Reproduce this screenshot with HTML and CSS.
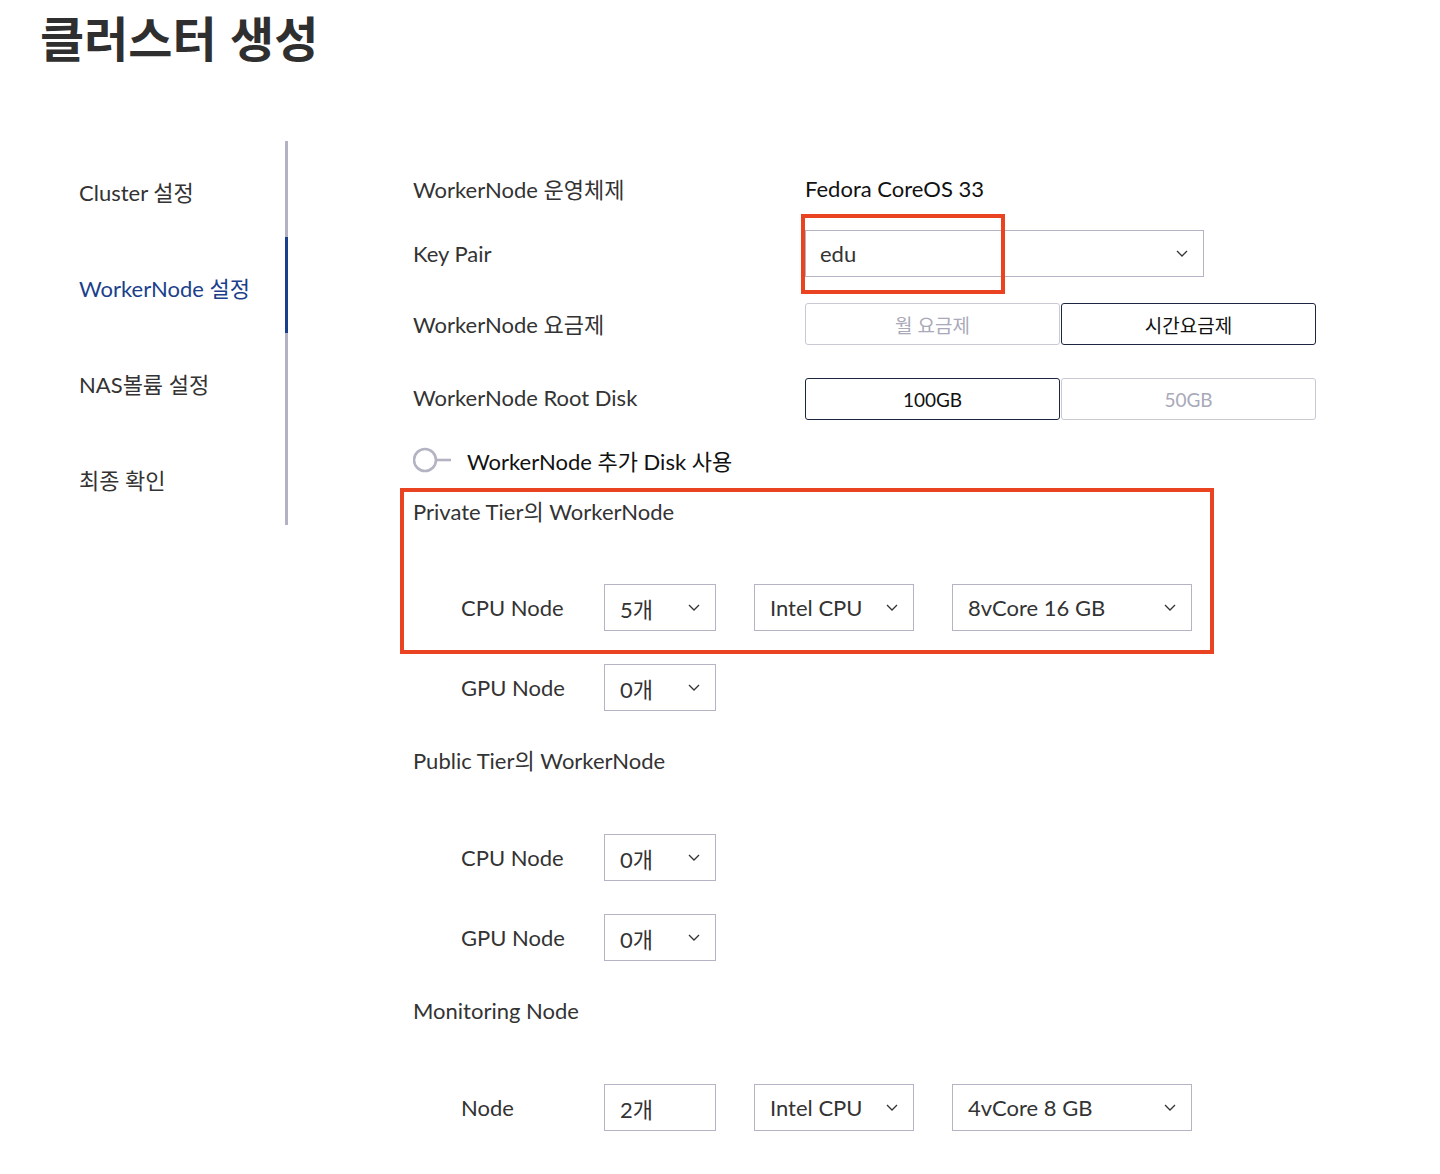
FILE: index.html
```html
<!DOCTYPE html>
<html lang="ko">
<head>
<meta charset="utf-8">
<title>클러스터 생성</title>
<link rel="stylesheet" href="styles.css">
</head>
<body>
<h1 class="title">클러스터 생성</h1>
<div class="layout">
  <nav class="steps">
    <div class="step">Cluster 설정</div>
    <div class="step active">WorkerNode 설정</div>
    <div class="step">NAS볼륨 설정</div>
    <div class="step">최종 확인</div>
  </nav>
  <main class="form">
    <div class="row row-os">
      <div class="label">WorkerNode 운영체제</div>
      <div class="value">Fedora CoreOS 33</div>
    </div>
    <div class="row row-key">
      <div class="label">Key Pair</div>
      <div class="select select-key">
        <span>edu</span>
        <svg class="chev" width="12" height="7" viewBox="0 0 12 7"><path d="M1 1l5 5 5-5" fill="none" stroke="#333" stroke-width="1.3"/></svg>
        <div class="highlight highlight-key"></div>
      </div>
    </div>
    <div class="row row-btn">
      <div class="label">WorkerNode 요금제</div>
      <div class="seg">
        <div class="seg-btn">월 요금제</div>
        <div class="seg-btn on">시간요금제</div>
      </div>
    </div>
    <div class="row row-btn row-disk">
      <div class="label">WorkerNode Root Disk</div>
      <div class="seg">
        <div class="seg-btn on">100GB</div>
        <div class="seg-btn">50GB</div>
      </div>
    </div>
    <div class="row row-toggle">
      <svg class="toggle" width="40" height="26" viewBox="0 0 40 26"><circle cx="12" cy="13" r="11" fill="none" stroke="#b3b3c3" stroke-width="2.6"/><path d="M23 13h15" stroke="#b3b3c3" stroke-width="2.6"/></svg>
      <div class="toggle-text">WorkerNode 추가 Disk 사용</div>
    </div>

    <section class="group boxed">
      <div class="group-title">Private Tier의 WorkerNode</div>
      <div class="node-row">
        <div class="node-label">CPU Node</div>
        <div class="select s-count"><span>5개</span><svg class="chev" width="12" height="7" viewBox="0 0 12 7"><path d="M1 1l5 5 5-5" fill="none" stroke="#333" stroke-width="1.3"/></svg></div>
        <div class="select s-cpu"><span>Intel CPU</span><svg class="chev" width="12" height="7" viewBox="0 0 12 7"><path d="M1 1l5 5 5-5" fill="none" stroke="#333" stroke-width="1.3"/></svg></div>
        <div class="select s-spec"><span>8vCore 16 GB</span><svg class="chev" width="12" height="7" viewBox="0 0 12 7"><path d="M1 1l5 5 5-5" fill="none" stroke="#333" stroke-width="1.3"/></svg></div>
      </div>
    </section>
    <div class="node-row after-box">
      <div class="node-label">GPU Node</div>
      <div class="select s-count"><span>0개</span><svg class="chev" width="12" height="7" viewBox="0 0 12 7"><path d="M1 1l5 5 5-5" fill="none" stroke="#333" stroke-width="1.3"/></svg></div>
    </div>

    <section class="group">
      <div class="group-title">Public Tier의 WorkerNode</div>
      <div class="node-row">
        <div class="node-label">CPU Node</div>
        <div class="select s-count"><span>0개</span><svg class="chev" width="12" height="7" viewBox="0 0 12 7"><path d="M1 1l5 5 5-5" fill="none" stroke="#333" stroke-width="1.3"/></svg></div>
      </div>
      <div class="node-row">
        <div class="node-label">GPU Node</div>
        <div class="select s-count"><span>0개</span><svg class="chev" width="12" height="7" viewBox="0 0 12 7"><path d="M1 1l5 5 5-5" fill="none" stroke="#333" stroke-width="1.3"/></svg></div>
      </div>
    </section>

    <section class="group">
      <div class="group-title">Monitoring Node</div>
      <div class="node-row">
        <div class="node-label">Node</div>
        <div class="select s-count"><span>2개</span></div>
        <div class="select s-cpu"><span>Intel CPU</span><svg class="chev" width="12" height="7" viewBox="0 0 12 7"><path d="M1 1l5 5 5-5" fill="none" stroke="#333" stroke-width="1.3"/></svg></div>
        <div class="select s-spec"><span>4vCore 8 GB</span><svg class="chev" width="12" height="7" viewBox="0 0 12 7"><path d="M1 1l5 5 5-5" fill="none" stroke="#333" stroke-width="1.3"/></svg></div>
      </div>
    </section>
  </main>
</div>
</body>
</html>
```

FILE: styles.css
```css
* { box-sizing: border-box; }

html, body {
  margin: 0;
  padding: 0;
  background: #ffffff;
}

body {
  font-family: Lato, "Noto Sans CJK KR", sans-serif;
  color: #333333;
  width: 1440px;
  min-height: 1174px;
}

.title {
  margin: 0;
  padding-left: 40px;
  height: 72px;
  line-height: 72px;
  font-family: "Noto Sans CJK KR", sans-serif;
  font-size: 48px;
  font-weight: 700;
  color: #2f2f2f;
}

.layout {
  display: flex;
  margin-top: 69px;
}

/* sidebar */
.steps {
  width: 288px;
  flex: none;
  display: flex;
  flex-direction: column;
}

.step {
  height: 96px;
  display: flex;
  align-items: center;
  padding-left: 79px;
  padding-top: 3px;
  font-size: 22px;
  color: #333333;
  border-right: 3px solid #b2b2c4;
}

.step.active {
  color: #1b3f8b;
  border-right-color: #1b3f8b;
}

/* main form */
.form {
  flex: 1;
  padding-left: 125px;
  padding-top: 24px;
}

.row {
  display: flex;
  align-items: center;
}

.label {
  width: 392px;
  flex: none;
  font-size: 22px;
  color: #333333;
}

.value {
  font-size: 22px;
  color: #111111;
}

.row-os { height: 46px; }

.row-key { margin-top: 19px; }

.row-btn { margin-top: 26px; }

.row-btn .label { margin-top: -3px; }

.row-disk { margin-top: 33px; }

.select {
  position: relative;
  display: flex;
  align-items: center;
  justify-content: space-between;
  height: 47px;
  padding: 0 15px;
  border: 1px solid #b4b4c4;
  font-size: 22px;
  color: #333333;
}

.select-key {
  width: 399px;
  height: 47px;
  padding-left: 14px;
}

.chev { flex: none; }

.highlight {
  position: absolute;
  border: 4px solid #ea4322;
  pointer-events: none;
}

.highlight-key {
  left: -5px;
  top: -17px;
  width: 204px;
  height: 80px;
}

.seg {
  display: flex;
  gap: 1px;
}

.seg-btn {
  width: 255px;
  height: 42px;
  display: flex;
  align-items: center;
  justify-content: center;
  border: 1px solid #c9c9d3;
  border-radius: 3px;
  font-size: 19px;
  color: #a9a9b9;
}

.seg-btn.on {
  border-color: #1c2640;
  color: #111111;
}

.row-toggle {
  margin-top: 27px;
  height: 26px;
}

.toggle {
  flex: none;
  margin-left: 0;
}

.toggle-text {
  margin-left: 14px;
  font-size: 22px;
  color: #111111;
}

/* node groups */
.group-title {
  height: 30px;
  line-height: 30px;
  font-size: 22px;
  color: #333333;
}

.group {
  margin-top: 35px;
}

.group .group-title + .node-row {
  margin-top: 58px;
}

.group .node-row + .node-row {
  margin-top: 33px;
}

.boxed {
  margin-top: 15px;
  margin-left: -13px;
  width: 814px;
  border: 4px solid #ea4322;
  padding: 5px 0 19px 9px;
}

.boxed .group-title + .node-row {
  margin-top: 57px;
}

.node-row {
  display: flex;
  align-items: center;
  padding-left: 48px;
}

.after-box { margin-top: 10px; }

.node-label {
  width: 143px;
  flex: none;
  font-size: 22px;
  color: #333333;
}

.s-count { width: 112px; }

.s-cpu {
  width: 160px;
  margin-left: 38px;
}

.s-spec {
  width: 240px;
  margin-left: 38px;
}
```
